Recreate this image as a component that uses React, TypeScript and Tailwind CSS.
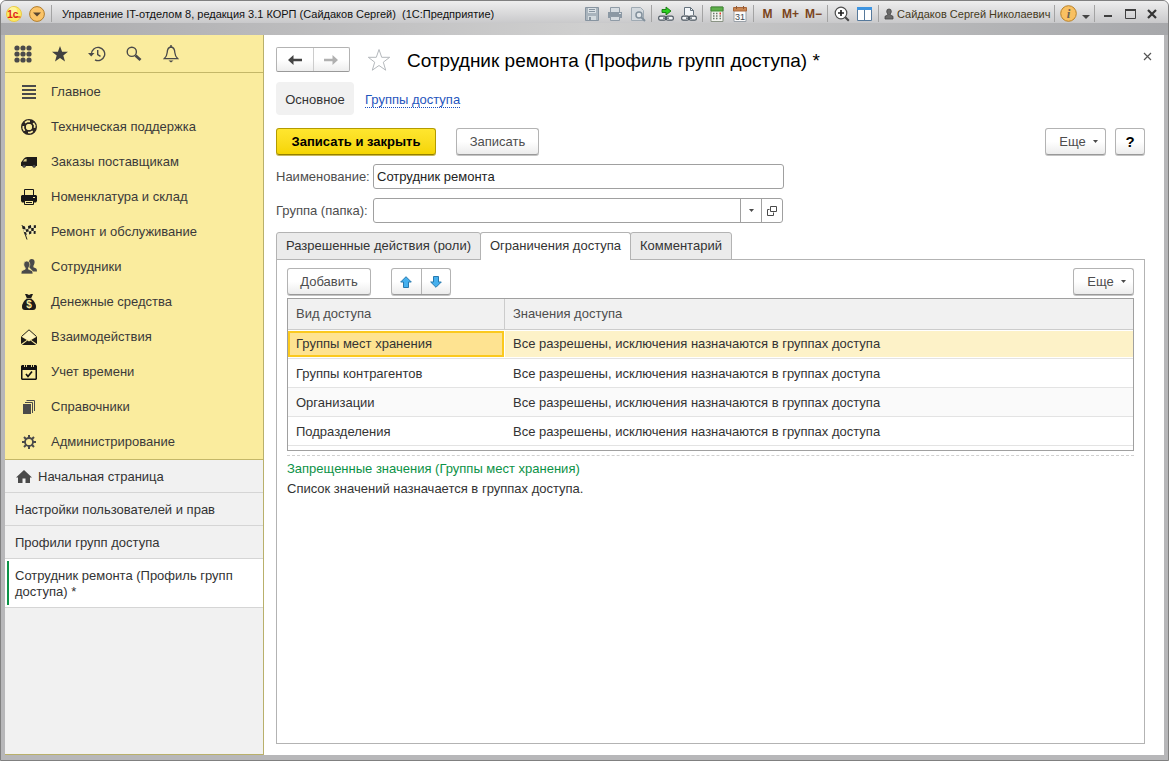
import { useState } from "react";
import type { ReactNode } from "react";

type IconProps = { children: ReactNode; size?: number };

function Icon16({ children, size = 16 }: IconProps) {
  return (
    <svg width={size} height={size} viewBox="0 0 16 16" aria-hidden="true" className="shrink-0">
      {children}
    </svg>
  );
}

const dark = "#4a4a4a";

const menuItems: { label: string; icon: ReactNode }[] = [
  {
    label: "Главное",
    icon: (
      <Icon16>
        <path d="M1 1h14v2H1zM1 5h14v2H1zM1 9h14v2H1zM1 13h14v2H1z" fill={dark} />
      </Icon16>
    ),
  },
  {
    label: "Техническая поддержка",
    icon: (
      <Icon16>
        <circle cx="8" cy="8" r="5.500" fill="none" stroke="#2b2522" strokeWidth="5" />
        <path d="M4 3.800 6.400 2.200 9 2.400M12.300 4l1.500 2.400-.3 2.400M11.800 12.200 9.300 13.600 7 13.500M3.600 11.800 2.300 9.400 2.400 7" stroke="#faec9e" strokeWidth="1.700" fill="none" />
        <circle cx="8" cy="8" r="2.900" fill="#faec9e" />
      </Icon16>
    ),
  },
  {
    label: "Заказы поставщикам",
    icon: (
      <Icon16>
        <path d="M6 3h10v9h-1.200a1.800 1.800 0 0 1-3.400 0H4.800a1.800 1.800 0 0 1-3.400 0H0V8.600L3 4.600Q4 3.400 6 3z" fill="#1d1b19" />
        <path d="M3.600 5.200 5.600 4.800V7.600H2z" fill="#d9cd8c" />
        <circle cx="3.100" cy="12.300" r="1.500" fill="#4a4a4a" />
        <circle cx="13.100" cy="12.300" r="1.500" fill="#4a4a4a" />
      </Icon16>
    ),
  },
  {
    label: "Номенклатура и склад",
    icon: (
      <Icon16>
        <path d="M3.500 7V.5h9V7" fill="#faec9e" stroke="#171717" />
        <path d="M1 6h14l1 1v5l-1 1.500H1L0 12V7z" fill="#171717" />
        <path d="M3.500 11.500h9v4h-9z" fill="#faec9e" stroke="#171717" />
        <path d="M5 13.500h6" stroke="#171717" />
        <path d="M12 8h2v1h-2z" fill="#faec9e" />
      </Icon16>
    ),
  },
  {
    label: "Ремонт и обслуживание",
    icon: (
      <Icon16>
        <path d="m1 1 5 14.500" stroke="#222" fill="none" />
        <path d="m1 1.500 4 1 4-1.500 6 .5-.5 8.500-5-.5-3 2-3-1z" fill="#f5edb5" />
        <path d="m1 1.500 3 1 .6 3-2.800-.6zM7 2.100 10 1l.2 3-2.900 1zM12.800 1.300h2.200l-.2 2.700h-2zM4.600 5.400 7.300 5l.5 2.600-2.600.5zM10.200 4l2.600.1-.1 2.900-2.400-.1zM2.700 7.900l2.500.3.5 3-2-.6zM7.800 7.600l2.500-.7.1 2.500-2.200 1.100zM12.700 7l2 .1-.2 2.900-1.900-.3z" fill="#1c1c1c" />
      </Icon16>
    ),
  },
  {
    label: "Сотрудники",
    icon: (
      <Icon16>
        <path d="M10.600 0a3 3 0 0 1 3 3c0 2-.8 3-1.200 3.800v1.500l2.800 1.200q.8.600.8 3h-4L8 8 8 2Q8.500.2 10.600 0z" fill={dark} />
        <path d="M5.800 2a3 3 0 0 1 3 3.200c0 2-.9 3-1.300 3.700v1.300L11 11.600q1 .8 1 3.400H0q0-2.600 1-3.400l3.200-1.400V8.900C3.700 8 2.800 7 2.800 5.200A3 3 0 0 1 5.800 2z" fill={dark} stroke="#faec9e" strokeWidth=".7" />
      </Icon16>
    ),
  },
  {
    label: "Денежные средства",
    icon: (
      <Icon16>
        <path d="M4 0h2l2 1 2-1h2l-2 4.500q5 3.500 5 8.500-.2 3-3 3H4q-3 0-3-3 0-5 5-8.500z" fill="#1d1b19" />
        <path d="M5.500 4.500h5" stroke="#b5aa75" strokeWidth=".8" />
        <text x="8" y="13.800" textAnchor="middle" fontSize="10" fontWeight="700" fontFamily="Liberation Sans, sans-serif" fill="#faec9e">$</text>
      </Icon16>
    ),
  },
  {
    label: "Взаимодействия",
    icon: (
      <Icon16>
        <path d="M.5 7.500 8 .8l7.500 6.700" fill="none" stroke="#222" />
        <path d="m1.500 8 6.500-6 6.500 6L8 11z" fill="#fdf4be" />
        <path d="M0 7.500 5.800 11 0 15zM16 7.500 10.200 11 16 15zM.8 16l5.700-4.500L8 12.500l1.500-1 5.700 4.500z" fill="#1d1b19" />
      </Icon16>
    ),
  },
  {
    label: "Учет времени",
    icon: (
      <Icon16>
        <path d="M1 1h14l1 1v13l-1 1H1l-1-1V2zM1.500 6v8.500h13V6z" fill="#111" fillRule="evenodd" />
        <path d="M3.500 0v3M5.500 0v3M10.500 0v3M12.500 0v3" stroke="#faec9e" strokeWidth=".9" />
        <path d="m5 10 2 2.500L11 7.500" stroke="#111" strokeWidth="1.700" fill="none" />
      </Icon16>
    ),
  },
  {
    label: "Справочники",
    icon: (
      <Icon16>
        <path d="M2 5h8v10H2z" fill={dark} />
        <path d="M4 3.500h7.500V14M5.500 1.500h8V12" stroke={dark} fill="none" />
      </Icon16>
    ),
  },
  {
    label: "Администрирование",
    icon: (
      <Icon16>
        <circle cx="8" cy="8" r="4" fill="none" stroke={dark} strokeWidth="1.800" />
        <path d="M8 1v3M8 12v3M1 8h3M12 8h3M3 3l2.200 2.200M10.800 10.800 13 13M13 3l-2.200 2.200M5.200 10.800 3 13" stroke={dark} strokeWidth="2" />
      </Icon16>
    ),
  },
];

const rows = ["Группы мест хранения", "Группы контрагентов", "Организации", "Подразделения"];
const allowedText = "Все разрешены, исключения назначаются в группах доступа";

const buttonBase =
  "flex h-[27px] items-center justify-center rounded-[3px] border border-[#b3b3b3] border-b-[#999] bg-linear-to-b from-white from-50% to-[#ececec] text-[#4d4d4d] shadow-[0_1px_0_#c4c4c4]";

function Separator() {
  return <span className="mx-0.5 h-[17px] w-px shrink-0 bg-[#a3a3a3]" />;
}

function ToolButton({ label, children }: { label: string; children: ReactNode }) {
  return (
    <button type="button" aria-label={label} className="flex w-[23px] shrink-0 items-center justify-center">
      {children}
    </button>
  );
}

function Chain() {
  return (
    <>
      <rect x=".7" y="10.200" width="7" height="4" rx="1.500" fill="#f4f6f8" stroke="#4c5760" strokeWidth="1.200" />
      <rect x="8.300" y="10.200" width="7" height="4" rx="1.500" fill="#f4f6f8" stroke="#4c5760" strokeWidth="1.200" />
      <path d="M5 12.200h6" stroke="#4c5760" strokeWidth="1.200" />
    </>
  );
}

function TitleBar() {
  return (
    <header className="flex h-[34px] shrink-0 flex-col">
      <div className="flex h-[22px] items-center bg-linear-to-b from-[#eeeeee] to-[#c9c9cb] px-[5px] pt-[3px] text-[11px] leading-4 text-[#111]">
        <svg width="16" height="16" viewBox="0 0 16 16" aria-hidden="true" className="shrink-0">
          <circle cx="8" cy="8" r="7.500" fill="#fdec62" stroke="#e9c94a" />
          <circle cx="7" cy="5" r="4" fill="#fff8b0" opacity=".7" />
          <text x="1.200" y="11.500" fontSize="10" fontWeight="700" fontFamily="Liberation Sans, sans-serif" fill="#e01f1a">1c</text>
          <path d="M9 11h5.500" stroke="#e01f1a" strokeWidth="1.200" />
        </svg>
        <button type="button" aria-label="Меню" className="ml-[7px] shrink-0">
          <svg width="16" height="16" viewBox="0 0 16 16" aria-hidden="true">
            <circle cx="8" cy="8" r="7.400" fill="#fbc468" stroke="#b07c2c" />
            <path d="M4 6.500h8L8 10.500z" fill="#5a4630" />
          </svg>
        </button>
        <span className="mx-[6px] h-[17px] w-px shrink-0 bg-[#a3a3a3]" />
        <h1 className="ml-[4px] truncate whitespace-pre">Управление IT-отделом 8, редакция 3.1 КОРП (Сайдаков Сергей)  (1С:Предприятие)</h1>
        <div className="ml-auto flex shrink-0 items-center">
          <ToolButton label="Сохранить">
            <Icon16>
              <path d="M1.500 1.500h13v13h-13z" fill="#a9b4bd" stroke="#8794a0" />
              <path d="M4 2h8v5H4z" fill="#dbe1e5" />
              <path d="M5 3.500h6M5 5.500h6" stroke="#8794a0" />
              <path d="M4 10h8v4H4z" fill="#d3dade" />
              <path d="M5 11h2v3H5z" fill="#8794a0" />
            </Icon16>
          </ToolButton>
          <ToolButton label="Печать">
            <Icon16>
              <path d="M3.500 6V1.500h9V6" fill="#d6dce1" stroke="#8f9ba6" />
              <path d="M1 6h14v6H1z" fill="#8b98a4" />
              <path d="M3.500 10.500h9v4h-9z" fill="#d6dce1" stroke="#8f9ba6" />
              <path d="M12 7.500h2" stroke="#dfe4e8" />
            </Icon16>
          </ToolButton>
          <ToolButton label="Просмотр">
            <Icon16>
              <path d="M1.500 1.500h9l3 3v10h-12z" fill="#d3d9de" stroke="#9faab3" />
              <circle cx="9" cy="9" r="3" fill="#e3e7ea" stroke="#82909c" strokeWidth="1.500" />
              <path d="m11 11 4 4" stroke="#82909c" strokeWidth="2" />
            </Icon16>
          </ToolButton>
          <Separator />
          <ToolButton label="Перейти по ссылке">
            <Icon16>
              <Chain />
              <path d="M4 3.500h4V1l5 4-5 4V6.500H4z" fill="#2bd01f" stroke="#14760d" strokeWidth=".9" />
            </Icon16>
          </ToolButton>
          <ToolButton label="Получить ссылку">
            <Icon16>
              <path d="M3.500 9V1.500h6l3 3V9" fill="#f3f6f9" stroke="#65727d" />
              <path d="M9.500 1.500v3h3" fill="none" stroke="#65727d" />
              <Chain />
            </Icon16>
          </ToolButton>
          <Separator />
          <ToolButton label="Калькулятор">
            <Icon16>
              <path d="M2 1h12v14.500H2z" fill="#f2f4ef" stroke="#8a9385" />
              <path d="M2 1h12v4H2z" fill="#5fae4b" stroke="#3f8a33" />
              <path d="M4 7.500h1.500M7 7.500h1.500M4 10h1.500M7 10h1.500M4 12.500h1.500M7 12.500h1.500M10.500 10H12M10.500 12.500H12" stroke="#6d776a" strokeWidth="1.500" />
              <path d="M10.500 7.500H12" stroke="#e23a2a" strokeWidth="1.800" />
            </Icon16>
          </ToolButton>
          <ToolButton label="Календарь">
            <Icon16>
              <path d="M2 2h12v13.500H2z" fill="#fafafa" stroke="#9aa1a8" />
              <path d="M1.500 1.500h13v3.500h-13z" fill="#c98550" stroke="#a9663a" />
              <path d="M4.500 0v3M11.500 0v3" stroke="#8f5a35" />
              <text x="8" y="13.500" textAnchor="middle" fontSize="9" fontFamily="Liberation Sans, sans-serif" fill="#3f4850">31</text>
            </Icon16>
          </ToolButton>
          <Separator />
          <button type="button" className="w-[23px] text-[12px] font-bold text-[#7a4420]">M</button>
          <button type="button" className="w-[23px] text-[12px] font-bold text-[#7a4420]">M+</button>
          <button type="button" className="w-[23px] text-[12px] font-bold text-[#7a4420]">M−</button>
          <Separator />
          <ToolButton label="Масштаб">
            <Icon16>
              <circle cx="7" cy="7" r="5.800" fill="#fff" stroke="#4e4e4e" strokeWidth="1.200" />
              <path d="M4 7h6M7 4v6" stroke="#222" strokeWidth="1.700" />
              <path d="m11.300 11.300 3.500 3.500" stroke="#444" strokeWidth="2" />
            </Icon16>
          </ToolButton>
          <ToolButton label="Панели">
            <Icon16>
              <path d="M.5 1.500h14v13H.5z" fill="#fff" stroke="#56799b" />
              <path d="M0 1h15v3H0z" fill="#3d94e0" />
              <path d="M7.500 4v10" stroke="#56799b" />
            </Icon16>
          </ToolButton>
          <Separator />
          <button type="button" className="flex w-[171px] items-center gap-[3px] pl-[3px] text-[#453a1c]">
            <svg width="10" height="12" viewBox="0 0 10 12" aria-hidden="true" className="shrink-0">
              <path d="M5 1a2.300 2.300 0 0 1 2.300 2.300Q7.300 5 6.200 6v1L9 8.300V11H1V8.300L3.800 7V6Q2.700 5 2.700 3.300A2.300 2.300 0 0 1 5 1z" fill="#6a6a6a" stroke="#444" strokeWidth=".8" />
            </svg>
            <span className="whitespace-nowrap">Сайдаков Сергей Николаевич</span>
          </button>
          <Separator />
          <button type="button" aria-label="Информация" className="flex w-[22px] justify-center">
            <svg width="17" height="17" viewBox="0 0 17 17" aria-hidden="true">
              <circle cx="8.500" cy="8.500" r="7.800" fill="#f8c062" stroke="#b98127" />
              <text x="8.500" y="13" textAnchor="middle" fontSize="13" fontStyle="italic" fontWeight="700" fontFamily="Liberation Serif, serif" fill="#6b6253">i</text>
            </svg>
          </button>
          <button type="button" aria-label="Ещё" className="flex w-[13px] justify-center pt-[6px]">
            <svg width="8" height="4" viewBox="0 0 8 4" aria-hidden="true">
              <path d="M0 0h8L4 4z" fill="#444" />
            </svg>
          </button>
          <Separator />
          <button type="button" aria-label="Свернуть" className="flex w-[22px] justify-center pt-[6px]">
            <svg width="8" height="3" viewBox="0 0 8 3" aria-hidden="true">
              <path d="M0 0h8v2H0z" fill="#3f3f3f" />
            </svg>
          </button>
          <button type="button" aria-label="Развернуть" className="flex w-[22px] justify-center">
            <svg width="11" height="10" viewBox="0 0 11 10" aria-hidden="true">
              <path d="M.5 1v8.500h10V1z" fill="none" stroke="#3f3f3f" />
              <path d="M0 0h11v2H0z" fill="#3f3f3f" />
            </svg>
          </button>
          <button type="button" aria-label="Закрыть окно" className="flex w-[22px] justify-center">
            <svg width="10" height="10" viewBox="0 0 10 10" aria-hidden="true">
              <path d="m1 1 8 8M9 1 1 9" stroke="#333" strokeWidth="2.200" />
            </svg>
          </button>
        </div>
      </div>
      <div className="flex-1 bg-linear-to-r from-[#a9a9ac] via-[#cfcfcf] to-[#a7a8ab]" />
    </header>
  );
}

function Sidebar() {
  return (
    <aside className="flex w-[259px] shrink-0 flex-col border-r border-b border-[#b9b06b] bg-[#f1f1f1]">
      <div className="flex h-[38px] shrink-0 items-center gap-[17px] border-b border-[#c4b768] bg-[#faec9e] pl-2">
        <button type="button" aria-label="Функции" className="flex w-5 justify-center">
          <svg width="18" height="18" viewBox="0 0 18 18" aria-hidden="true" fill="#4a4a4a">
            <circle cx="3" cy="3" r="2.600" /><circle cx="9" cy="3" r="2.600" /><circle cx="15" cy="3" r="2.600" />
            <circle cx="3" cy="9" r="2.600" /><circle cx="9" cy="9" r="2.600" /><circle cx="15" cy="9" r="2.600" />
            <circle cx="3" cy="15" r="2.600" /><circle cx="9" cy="15" r="2.600" /><circle cx="15" cy="15" r="2.600" />
          </svg>
        </button>
        <button type="button" aria-label="Избранное" className="flex w-5 justify-center">
          <Icon16>
            <path d="m8 0 2.100 5.700H16l-4.700 3.700L13 15.500 8 12l-5 3.500 1.700-6.100L0 5.700h5.900z" fill="#404040" />
          </Icon16>
        </button>
        <button type="button" aria-label="История" className="flex w-5 justify-center">
          <svg width="18" height="16" viewBox="0 0 18 16" aria-hidden="true">
            <path d="M3.500 8A6.600 6.600 0 1 1 7 13.800" fill="none" stroke="#4a4a4a" strokeWidth="1.400" />
            <path d="M0 7h6.500L3.200 10.500z" fill="#4a4a4a" />
            <path d="M9.700 4v4.500l2.800 1.800" fill="none" stroke="#4a4a4a" strokeWidth="1.400" />
          </svg>
        </button>
        <button type="button" aria-label="Поиск" className="flex w-5 justify-center">
          <Icon16>
            <circle cx="5.800" cy="5.800" r="4.600" fill="none" stroke="#4a4a4a" strokeWidth="1.400" />
            <path d="m9.500 9.500 5 4.500" stroke="#4a4a4a" strokeWidth="2.800" />
          </Icon16>
        </button>
        <button type="button" aria-label="Оповещения" className="flex w-5 justify-center">
          <svg width="16" height="18" viewBox="0 0 16 18" aria-hidden="true">
            <path d="M8 2Q4.300 2.500 4.200 7.500 4 11 1.200 13.700h13.600Q12 11 11.800 7.500 11.700 2.500 8 2z" fill="none" stroke="#4a4a4a" strokeWidth="1.300" />
            <path d="M8 0v2" stroke="#4a4a4a" strokeWidth="1.500" />
            <path d="M5.500 15.500h5L8 17.500z" fill="#4a4a4a" />
          </svg>
        </button>
      </div>
      <nav className="border-b border-[#c4b768] bg-[#faec9e] pt-px" aria-label="Разделы">
        {menuItems.map((item) => (
          <a key={item.label} href="#" className="flex h-[35px] items-center gap-[14px] pl-4 text-[#3a3a3a]">
            {item.icon}
            <span>{item.label}</span>
          </a>
        ))}
      </nav>
      <nav aria-label="Открытые окна" className="leading-4 text-[#333]">
        <a href="#" className="flex h-[33px] items-center gap-[6px] border-b border-[#d5d5d5] pt-0.5 pl-[11px]">
          <svg width="16" height="14" viewBox="0 0 16 14" aria-hidden="true">
            <path d="M8 0 16 7.500h-2V13H9.500V8.500h-3V13H2V7.500H0z" fill={dark} />
          </svg>
          Начальная страница
        </a>
        <a href="#" className="flex h-[33px] items-center border-b border-[#d5d5d5] pt-0.5 pl-[10px]">Настройки пользователей и прав</a>
        <a href="#" className="flex h-[33px] items-center border-b border-[#d5d5d5] pt-0.5 pl-[10px]">Профили групп доступа</a>
        <a href="#" aria-current="page" className="flex border-b border-[#d5d5d5] bg-white py-[2px] pl-[2px]">
          <span className="w-[2px] shrink-0 bg-[#0c9246]" />
          <span className="pt-[7px] pr-6 pb-[5px] pl-[6px]">Сотрудник ремонта (Профиль групп доступа) *</span>
        </a>
      </nav>
    </aside>
  );
}

function MoreButton() {
  return (
    <button type="button" className={`${buttonBase} w-[61px] gap-[7px] pl-1.5`}>
      Еще
      <svg width="5" height="3" viewBox="0 0 5 3" aria-hidden="true">
        <path d="M0 0h5L2.500 3z" fill="#4a4a4a" />
      </svg>
    </button>
  );
}

const tabs = ["Разрешенные действия (роли)", "Ограничения доступа", "Комментарий"];

export default function App() {
  const [name, setName] = useState("Сотрудник ремонта");
  const [group, setGroup] = useState("");
  const [tab, setTab] = useState(1);

  return (
    <div className="flex min-h-screen flex-col overflow-hidden rounded-t-md border border-[#808080] bg-[#b7b7b9] font-['Liberation_Sans',Arial,sans-serif] text-[13px] leading-4">
      <TitleBar />
      <div className="mx-1 mb-[5px] flex flex-1 bg-white">
        <Sidebar />
        <main className="flex min-w-0 flex-1 flex-col pt-3 pr-[19px] pb-[11px] pl-3">
          <div className="flex h-[25px] items-center">
            <div className="flex h-[25px] w-[74px] shrink-0 rounded-xs border border-[#b3b3b3] border-b-[#999] bg-linear-to-b from-white from-50% to-[#eee]">
              <button type="button" aria-label="Назад" className="flex flex-1 items-center justify-center border-r border-[#ccc]">
                <svg width="14" height="10" viewBox="0 0 14 10" aria-hidden="true">
                  <path d="M14 3.800v2.400H5.500V10L0 5l5.500-5v3.800z" fill="#444" />
                </svg>
              </button>
              <button type="button" aria-label="Вперед" className="flex flex-1 items-center justify-center">
                <svg width="14" height="10" viewBox="0 0 14 10" aria-hidden="true">
                  <path d="M0 3.800v2.400h8.500V10L14 5 8.500 0v3.800z" fill="#b0b0b0" />
                </svg>
              </button>
            </div>
            <button type="button" aria-label="В избранное" className="ml-[17px] shrink-0">
              <svg width="24" height="24" viewBox="0 0 24 24" aria-hidden="true">
                <path d="m12 1.500 2.700 7.800h8l-6.400 4.900 2.400 8L12 17.500l-6.700 4.700 2.400-8L1.300 9.300h8z" fill="#fff" stroke="#b4b8bc" />
              </svg>
            </button>
            <h2 className="ml-4 flex-1 truncate pt-0.5 text-[19px] leading-6 text-black">Сотрудник ремонта (Профиль групп доступа) *</h2>
            <button type="button" aria-label="Закрыть" className="-mr-[7px] shrink-0 pb-1.5">
              <svg width="9" height="9" viewBox="0 0 9 9" aria-hidden="true">
                <path d="m1 1 7 7M8 1 1 8" stroke="#555" strokeWidth="1.200" />
              </svg>
            </button>
          </div>

          <div className="mt-[10px] flex items-center">
            <a href="#" aria-current="page" className="flex h-[33px] w-[78px] items-center justify-center rounded-[4px] bg-[#f1f1f1] pt-0.5 text-[#333]">Основное</a>
            <a href="#" className="mt-[3px] ml-[11px] border-b border-dotted border-[#1a4fc0] leading-[14px] text-[#1f55bd]">Группы доступа</a>
          </div>

          <div className="mt-[13px] flex items-center">
            <button type="button" className="flex h-[27px] w-40 items-center justify-center rounded-[3px] border border-[#b39b00] border-b-[#948000] bg-linear-to-b from-[#ffe62e] to-[#f5d500] font-bold text-black shadow-[0_1px_0_#c9b95a]">Записать и закрыть</button>
            <button type="button" className={`${buttonBase} ml-5 w-[83px]`}>Записать</button>
            <div className="ml-auto flex gap-[9px]">
              <MoreButton />
              <button type="button" aria-label="Справка" className={`${buttonBase} w-[30px] text-[15px] font-bold`}>
                <span className="text-black">?</span>
              </button>
            </div>
          </div>

          <div className="mt-[9px] flex h-[25px] items-center">
            <label htmlFor="name" className="w-[97px] shrink-0 text-[#4d4d4d]">Наименование:</label>
            <input id="name" value={name} onChange={(e) => setName(e.target.value)} className="h-[25px] w-[411px] rounded-[3px] border border-[#a0a0a0] bg-white px-[3px] text-[#222] outline-none" />
          </div>
          <div className="mt-[9px] flex h-[25px] items-center">
            <label htmlFor="group" className="w-[97px] shrink-0 text-[#4d4d4d]">Группа (папка):</label>
            <div className="flex h-[25px] w-[410px] rounded-[3px] border border-[#a0a0a0] bg-white">
              <input id="group" value={group} onChange={(e) => setGroup(e.target.value)} className="min-w-0 flex-1 px-[3px] outline-none" />
              <button type="button" aria-label="Выбрать из списка" className="flex w-[21px] items-center justify-center border-l border-[#a0a0a0]">
                <svg width="5" height="3" viewBox="0 0 5 3" aria-hidden="true">
                  <path d="M0 0h5L2.500 3z" fill="#4a4a4a" />
                </svg>
              </button>
              <button type="button" aria-label="Открыть" className="flex w-[21px] items-center justify-center border-l border-[#a0a0a0]">
                <svg width="10" height="10" viewBox="0 0 10 10" aria-hidden="true" fill="none" stroke="#4a4a4a">
                  <path d="M3.500.5h6v5h-6zM2.500 3.500h-2v6h6v-3" />
                </svg>
              </button>
            </div>
          </div>

          <div role="tablist" className="mt-[9px] flex h-[28px]">
            {tabs.map((label, index) => (
              <button
                key={label}
                type="button"
                role="tab"
                aria-selected={index === tab}
                onClick={() => setTab(index)}
                className={
                  index === tab
                    ? "relative z-10 -ml-px rounded-t-[3px] border border-b-0 border-[#b3b3b3] bg-white px-[9px] pb-px text-[#333] first:ml-0"
                    : "-ml-px rounded-t-[3px] border border-[#b3b3b3] bg-[#ebebeb] px-[9px] text-[#333] first:ml-0"
                }
              >
                {label}
              </button>
            ))}
          </div>
          <section role="tabpanel" className="-mt-px flex flex-1 flex-col border border-[#b3b3b3] px-[10px] pt-2">
            <div className="flex items-center">
              <button type="button" className={`${buttonBase} w-[84px]`}>Добавить</button>
              <div className={`${buttonBase} ml-5 w-[60px]`}>
                <button type="button" aria-label="Переместить вверх" className="flex h-full flex-1 items-center justify-center border-r border-[#b3b3b3]">
                  <svg width="12" height="12" viewBox="0 0 12 12" aria-hidden="true">
                    <path d="m6 .7 5.300 5.300H8.500v5.500h-5V6H.7z" fill="#45b0ee" stroke="#2779ae" />
                  </svg>
                </button>
                <button type="button" aria-label="Переместить вниз" className="flex h-full flex-1 items-center justify-center">
                  <svg width="12" height="12" viewBox="0 0 12 12" aria-hidden="true">
                    <path d="M6 11.300.7 6h2.800V.5h5V6h2.800z" fill="#45b0ee" stroke="#2779ae" />
                  </svg>
                </button>
              </div>
              <div className="ml-auto">
                <MoreButton />
              </div>
            </div>

            <div className="mt-[3px] border border-[#a0a0a0] pb-1">
              <table className="w-full table-fixed border-separate border-spacing-0 text-left text-[#333]">
                <thead>
                  <tr className="h-[31px] text-[#4d4d4d]">
                    <th scope="col" className="w-[217px] border-r border-b border-[#ccc] bg-[#f1f1f1] px-2 font-normal">Вид доступа</th>
                    <th scope="col" className="border-b border-[#ccc] bg-[#f1f1f1] px-2 font-normal">Значения доступа</th>
                  </tr>
                </thead>
                <tbody>
                  {rows.map((row, index) => (
                    <tr key={row} className={index === 2 ? "h-[29px] bg-[#fafafa]" : "h-[29px]"}>
                      <td className="border-b border-[#e3e3e3] p-0 align-top">
                        {index === 0 ? (
                          <div className="mt-px mr-px flex h-[26px] items-center border-2 border-[#fbc91e] bg-[#fee391] pl-[6px]">{row}</div>
                        ) : (
                          <div className="pt-[7px] pl-2">{row}</div>
                        )}
                      </td>
                      <td className="border-b border-[#e3e3e3] p-0 align-top">
                        <div className={index === 0 ? "mt-px flex h-[26px] items-center bg-[#fdf2c8] pl-2" : "pt-[7px] pl-2"}>{allowedText}</div>
                      </td>
                    </tr>
                  ))}
                </tbody>
              </table>
            </div>

            <div className="mt-1 border-t border-dashed border-[#d0d0d0]" />
            <p className="mt-1 leading-[18px] text-[#0c9246]">Запрещенные значения (Группы мест хранения)</p>
            <p className="mt-0.5 leading-[18px] text-[#333]">Список значений назначается в группах доступа.</p>
          </section>
        </main>
      </div>
    </div>
  );
}
